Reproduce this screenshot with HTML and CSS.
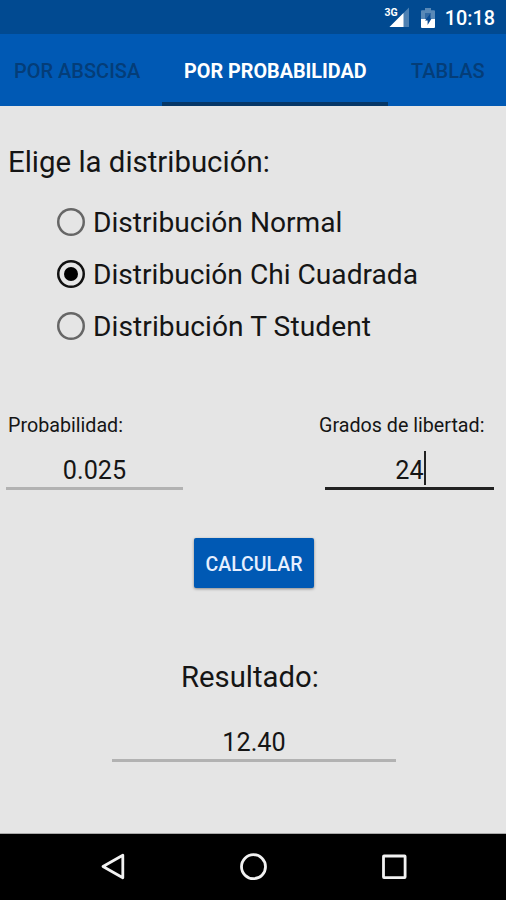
FILE: index.html
```html
<!DOCTYPE html>
<html lang="es">
<head>
<meta charset="utf-8">
<title>Distribuciones</title>
<link rel="stylesheet" href="styles.css">
</head>
<body>
<div class="screen">
  <header class="status">
    <svg class="signal" width="28" height="24" viewBox="0 0 28 24" role="img" aria-label="3G">
      <path d="M25 2.500V22H5.500z" fill="#fff" fill-opacity=".3"/>
      <path d="M19.500 8V22H5.500z" fill="#fff"/>
      <text class="net" x=".5" y="10.500">3G</text>
    </svg>
    <svg class="battery" width="14" height="20" viewBox="0 0 14 20">
      <path d="M4 0h6v2.300h3q1 0 1 1V11H0V3.300q0-1 1-1h3z" fill="#fff" fill-opacity=".35"/>
      <path d="M4 5h6v6H4z" fill="#084a92" fill-opacity=".5"/>
      <path d="M0 11h14v8q0 1-1 1H1q-1 0-1-1z" fill="#fff"/>
      <path d="M9 6L4 12.500h2.600V17l4-6.500H9z" fill="#084a92"/>
    </svg>
    <span class="clock">10:18</span>
  </header>
  <nav class="tabs">
    <a class="tab first">POR ABSCISA</a>
    <a class="tab active">POR PROBABILIDAD</a>
    <a class="tab last">TABLAS</a>
  </nav>
  <main class="content">
    <h1 class="question">Elige la distribución:</h1>
    <div class="options">
      <div class="option"><span class="radio"></span><span>Distribución Normal</span></div>
      <div class="option"><span class="radio checked"></span><span>Distribución Chi Cuadrada</span></div>
      <div class="option"><span class="radio"></span><span class="student">Distribución T Student</span></div>
    </div>
    <div class="fields">
      <div class="field prob">
        <div class="label">Probabilidad:</div>
        <div class="input">0.025</div>
      </div>
      <div class="field degrees">
        <div class="label">Grados de libertad:</div>
        <div class="input focused">24<span class="caret"></span></div>
      </div>
    </div>
    <button class="calc">CALCULAR</button>
    <h2 class="result-title">Resultado:</h2>
    <div class="input result">12.40</div>
  </main>
  <footer class="navbar">
    <svg width="28" height="30" viewBox="0 0 28 30"><path d="M23.800 3.200V25.800L4 14.500z"/></svg>
    <svg width="30" height="30" viewBox="0 0 30 30"><circle cx="14.500" cy="14.700" r="12"/></svg>
    <svg width="28" height="30" viewBox="0 0 28 30"><rect x="3.500" y="4" width="21.600" height="21.600" rx=".5"/></svg>
  </footer>
</div>
</body>
</html>
```
FILE: styles.css
```css
* { box-sizing: border-box; }
body { margin: 0; font-family: Roboto, "Liberation Sans", sans-serif; color: #151515; }
.screen { width: 506px; height: 900px; display: flex; flex-direction: column; background: #e5e5e5; overflow: hidden; }
.status { height: 34px; background: #014a91; display: flex; justify-content: flex-end; align-items: flex-start; padding-right: 11px; color: #fff; }
.signal { margin-top: 5px; margin-right: 9px; }
.net { font-size: 10.500px; font-weight: 700; fill: #fff; }
.battery { margin-top: 8px; margin-right: 10px; }
.clock { font-size: 19.800px; line-height: 24px; font-weight: 500; margin-top: 7px; }
.tabs { height: 72px; background: #0059b4; display: flex; font-size: 20px; font-weight: 500; line-height: 74px; white-space: nowrap; }
.tab { color: #043d78; }
.first { width: 162px; padding-left: 14px; }
.active { width: 226px; padding-left: 22px; color: #fff; font-size: 19.800px; font-weight: 700; line-height: 76px; border-bottom: 4px solid #063767; }
.last { padding-left: 23px; }
.content { height: 728px; display: flex; flex-direction: column; border-bottom: 1px solid #aaa; }
.question { font-size: 29.400px; font-weight: 400; line-height: 36px; margin: 38px 0 0 8px; }
.options { margin: 16px 0 0 56px; }
.option { height: 52px; display: flex; align-items: center; font-size: 28.150px; white-space: nowrap; }
.student { letter-spacing: .07px; }
.radio { width: 28px; height: 28px; box-shadow: inset 0 0 0 2.500px #666; border-radius: 50%; margin: -1px 8px 0 1px; display: flex; align-items: center; justify-content: center; }
.checked { box-shadow: inset 0 0 0 2.500px #111; }
.checked::after { content: ""; width: 14px; height: 14px; border-radius: 50%; background: #000; }
.fields { margin-top: 61px; display: flex; justify-content: space-between; padding: 0 12px 0 6px; }
.prob { width: 177px; }
.degrees { width: 175px; padding-left: 6px; }
.label { font-size: 19.700px; line-height: 26px; white-space: nowrap; }
.prob .label { margin-left: 2px; }
.degrees .label { margin-left: -6px; }
.input { height: 41px; margin-top: 10px; font-size: 25.200px; line-height: 44px; text-align: center; border-bottom: 3px solid #b2b2b2; }
.focused { border-color: #222; display: flex; justify-content: center; align-items: flex-start; padding-left: 2px; }
.caret { width: 2px; height: 34px; background: #222; margin-top: 2px; }
.calc { width: 120px; height: 50px; margin: 48px 0 0 194px; padding: 2px 0 0; border: 0; border-radius: 2px; background: #0059b4; color: #e6efff; font: 500 19.500px Roboto, sans-serif; box-shadow: 0 1px 3px rgba(0,0,0,.4); }
.result-title { font-size: 29.300px; font-weight: 400; line-height: 36px; margin: 71px 0 0 181px; }
.result { width: 284px; margin: 26px 0 0 112px; }
.navbar { height: 66px; background: #000; display: flex; justify-content: space-between; padding: 18px 98px 0 99px; }
.navbar svg { fill: none; stroke: #f2f2f2; stroke-width: 2.800; stroke-linejoin: round; }
```
